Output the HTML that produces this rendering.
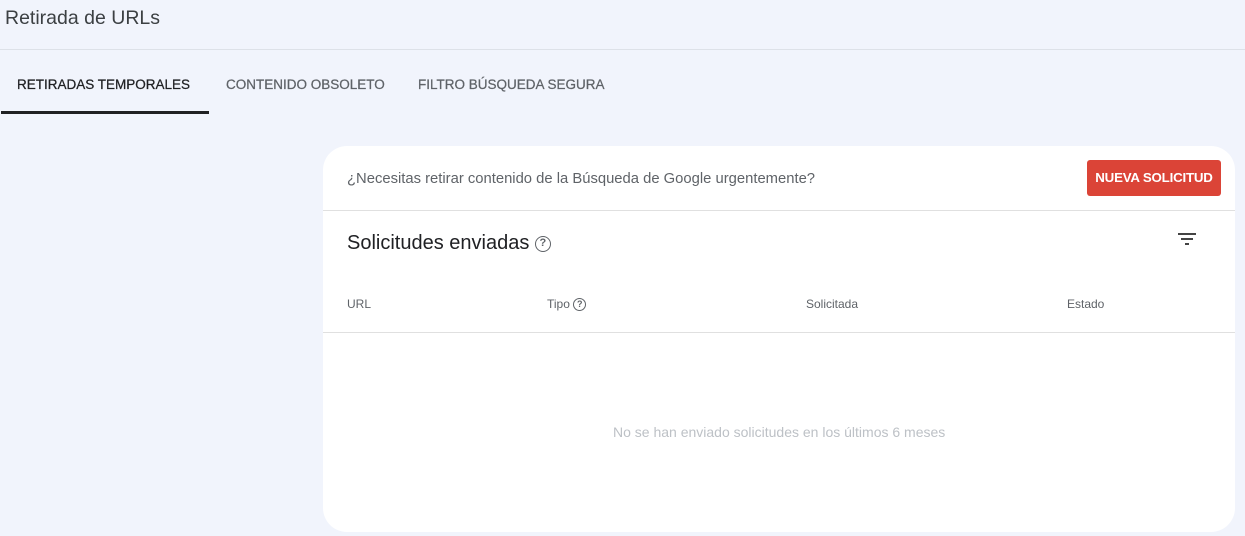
<!DOCTYPE html>
<html><head><meta charset="utf-8"><style>
*{margin:0;padding:0;box-sizing:border-box}
body{width:1245px;height:536px;background:#f1f4fc;font-family:"Liberation Sans",Arial,sans-serif;position:relative;overflow:hidden;color:#202124}
.a{position:absolute;white-space:nowrap}
.title{left:5px;top:7px;font-size:19.5px;color:#3c4043}
.hr{left:0;top:49px;width:1245px;height:1px;background:#dde1e8}
.tab{top:77px;font-size:13.5px;letter-spacing:0;color:#5f6368;-webkit-text-stroke:.25px}
.card{left:323px;top:146px;width:912px;height:386px;background:#fff;border-radius:24px}
.q{display:inline-block;width:15px;height:15px;border:1.5px solid #5f6368;border-radius:50%;font-size:10px;text-align:center;line-height:12px;color:#5f6368;font-weight:bold;vertical-align:middle}
.th{top:297px;font-size:12px;color:#5f6368}
</style></head><body>
<div class="a title">Retirada de URLs</div>
<div class="a hr"></div>
<div class="a tab" style="left:17px;color:#202124">RETIRADAS TEMPORALES</div>
<div class="a tab" style="left:226px">CONTENIDO OBSOLETO</div>
<div class="a tab" style="left:418px">FILTRO BÚSQUEDA SEGURA</div>
<div class="a" style="left:1px;top:111px;width:208px;height:3px;background:#202124"></div>
<div class="a card"></div>
<div class="a" style="left:347px;top:171px;font-size:14.8px;color:#5f6368">¿Necesitas retirar contenido de la Búsqueda de Google urgentemente?</div>
<div class="a" style="left:1087px;top:160px;width:134px;height:36px;background:#db4437;border-radius:3px;color:#fff;font-size:13.3px;font-weight:bold;text-align:center;line-height:36px;letter-spacing:-.2px">NUEVA SOLICITUD</div>
<div class="a" style="left:323px;top:210px;width:912px;height:1px;background:#e0e0e0"></div>
<div class="a" style="left:347px;top:232px;font-size:20px;color:#202124">Solicitudes enviadas <span class="q" style="width:16px;height:16px;line-height:13px;font-size:11px">?</span></div>
<svg class="a" style="left:1177px;top:231px" width="20" height="16" viewBox="0 0 20 16"><rect x="1" y="2" width="18" height="2" fill="#444"/><rect x="4" y="7" width="12" height="2" fill="#444"/><rect x="8" y="12" width="4" height="2" fill="#444"/></svg>
<div class="a th" style="left:347px">URL</div>
<div class="a th" style="left:547px">Tipo <span class="q" style="width:13px;height:13px;line-height:10px;font-size:9px;border-width:1.2px">?</span></div>
<div class="a th" style="left:806px">Solicitada</div>
<div class="a th" style="left:1067px">Estado</div>
<div class="a" style="left:323px;top:332px;width:912px;height:1px;background:#e0e0e0"></div>
<div class="a" style="left:613px;top:424px;font-size:14px;color:#bdc1c6">No se han enviado solicitudes en los últimos 6 meses</div>
</body></html>
